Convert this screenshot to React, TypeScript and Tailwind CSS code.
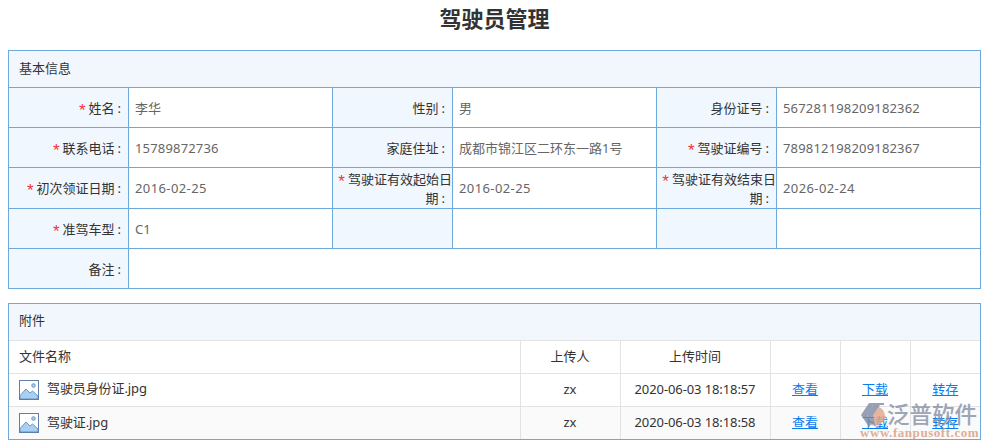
import React from "react";

const Label = ({ text, req }: { text: string; req?: boolean }) => (
  <td className="border border-[#6ea9dd] bg-[#f0f7fe] pl-[4px] pr-0 pt-[1px] text-right align-middle leading-[19px] text-[#333]">
    {req && <span className="mr-[3px] align-[-3px] font-['Liberation_Sans',sans-serif] text-[17px] leading-[10px] text-[#f5323d]">*</span>}
    {text}
    <span className="whitespace-nowrap">
      <span className="ml-[3px]">:</span>
      <span className="inline-block w-[7px]" />
    </span>
  </td>
);

const Value = ({ text, span, track }: { text?: string; span?: number; track?: string }) => (
  <td colSpan={span} className={"border border-[#6ea9dd] px-[6px] pt-[2px] align-middle text-[#666] " + (track || "")}>
    {text}
  </td>
);

const ImageIcon = () => (
  <svg width="20" height="20" viewBox="0 0 20 20" className="shrink-0">
    <rect x="0.5" y="0.5" width="19" height="19" fill="#fff" stroke="#5d7fa8" />
    <path d="M1 15.5 L7 9 L11 13 L13.5 11 L19 16 V19 H1 Z" fill="#a6d0f5" stroke="#5d7fa8" strokeWidth="0.8" />
    <circle cx="14.5" cy="5.5" r="1.8" fill="#a6d0f5" stroke="#5d7fa8" strokeWidth="0.8" />
  </svg>
);

const files = [
  { name: "驾驶员身份证.jpg", user: "zx", time: "2020-06-03 18:18:57" },
  { name: "驾驶证.jpg", user: "zx", time: "2020-06-03 18:18:58" },
];

const App = () => {
  return (
    <div className="h-[448px] w-[990px] overflow-hidden bg-white pl-2 pr-[9px] text-[13px] font-['Noto_Sans','Noto_Sans_CJK_SC',sans-serif] text-[#333]">
      <h1 className="h-[50px] pt-[1px] text-center text-[22px] leading-[34px] font-bold text-[#333]">
        驾驶员管理
      </h1>

      <div className="h-[37px] border border-b-0 border-[#6ea9dd] bg-[#f2f7fe] px-[10px] leading-[34px]">基本信息</div>
      <table className="w-[972px] table-fixed border-collapse">
        <colgroup>
          <col className="w-[120px]" />
          <col className="w-[204px]" />
          <col className="w-[120px]" />
          <col className="w-[204px]" />
          <col className="w-[120px]" />
          <col className="w-[204px]" />
        </colgroup>
        <tbody>
          <tr className="h-[40px]">
            <Label text="姓名" req />
            <Value text="李华" />
            <Label text="性别" />
            <Value text="男" />
            <Label text="身份证号" />
            <Value text="567281198209182362" track="tracking-[0.17px]" />
          </tr>
          <tr className="h-[40px]">
            <Label text="联系电话" req />
            <Value text="15789872736" track="tracking-[0.17px]" />
            <Label text="家庭住址" />
            <Value text="成都市锦江区二环东一路1号" />
            <Label text="驾驶证编号" req />
            <Value text="789812198209182367" track="tracking-[0.17px]" />
          </tr>
          <tr className="h-[41px]">
            <Label text="初次领证日期" req />
            <Value text="2016-02-25" track="tracking-[0.4px]" />
            <Label text="驾驶证有效起始日期" req />
            <Value text="2016-02-25" track="tracking-[0.4px]" />
            <Label text="驾驶证有效结束日期" req />
            <Value text="2026-02-24" track="tracking-[0.4px]" />
          </tr>
          <tr className="h-[40px]">
            <Label text="准驾车型" req />
            <Value text="C1" />
            <td className="border border-[#6ea9dd] bg-[#f0f7fe]" />
            <Value />
            <td className="border border-[#6ea9dd] bg-[#f0f7fe]" />
            <Value />
          </tr>
          <tr className="h-[40px]">
            <Label text="备注" />
            <Value span={5} />
          </tr>
        </tbody>
      </table>

      <div className="relative mt-[14px] h-[137px] w-[973px] overflow-hidden border border-[#6ea9dd]">
        <div className="h-[37px] border-b border-[#e3e3e3] bg-[#f2f7fe] px-[10px] leading-[33px]">附件</div>
        <table className="w-[971px] table-fixed border-collapse">
          <colgroup>
            <col className="w-[511px]" />
            <col className="w-[100px]" />
            <col className="w-[150px]" />
            <col className="w-[70px]" />
            <col className="w-[70px]" />
            <col className="w-[70px]" />
          </colgroup>
          <tbody>
            <tr className="h-[32px] border-b border-[#e3e3e3]">
              <td className="px-[10px] pb-[1px]">文件名称</td>
              <td className="border-l border-[#e3e3e3] pb-[1px] text-center">上传人</td>
              <td className="border-l border-[#e3e3e3] pb-[1px] text-center">上传时间</td>
              <td className="border-l border-[#e3e3e3]" />
              <td className="border-l border-[#e3e3e3]" />
              <td className="border-l border-[#e3e3e3]" />
            </tr>
            {files.map((item, index) => (
              <tr key={index} className={index === 0 ? "h-[33px] border-b border-[#e3e3e3]" : "h-[33px] bg-[#fafafa]"}>
                <td className="px-[10px]">
                  <div className="flex items-center gap-2">
                    <ImageIcon />
                    <span className="-mt-[1px] tracking-[-0.1px]">{item.name}</span>
                  </div>
                </td>
                <td className="border-l border-[#e3e3e3] text-center">{item.user}</td>
                <td className="border-l border-[#e3e3e3] text-center tracking-[-0.1px]">{item.time}</td>
                <td className="border-l border-[#e3e3e3] text-center text-[#0a7cf0] underline">查看</td>
                <td className="border-l border-[#e3e3e3] text-center text-[#0a7cf0] underline">下载</td>
                <td className="border-l border-[#e3e3e3] text-center text-[#0a7cf0] underline">转存</td>
              </tr>
            ))}
          </tbody>
        </table>

        {/* watermark */}
        <div className="absolute left-[851px] top-[98px] flex w-[122px] flex-col items-start opacity-80">
          <div className="flex items-center">
            <svg width="26" height="25" viewBox="0 0 26 25" className="shrink-0">
              <circle cx="15" cy="13" r="10" fill="#e2a58a" />
              <path d="M9 0 L1 12 L9 24 L12 20 L7 12 L13 2 L24 2 L24 0 Z" fill="#7d8aa6" />
              <path d="M7 12 L13 2 L20 2 L13 12 L16 24 L12 20 Z" fill="#7d8aa6" />
            </svg>
            <span className="ml-[1px] text-[22.5px] leading-[26px] font-medium whitespace-nowrap text-[#8590a6]">泛普软件</span>
          </div>
          <span className="-mt-[1px] font-['Liberation_Serif',serif] text-[13px] leading-[11px] font-bold tracking-[0.55px] whitespace-nowrap text-[#d99b80]">
            www.fanpusoft.com
          </span>
        </div>
      </div>
    </div>
  );
};

export default App;
